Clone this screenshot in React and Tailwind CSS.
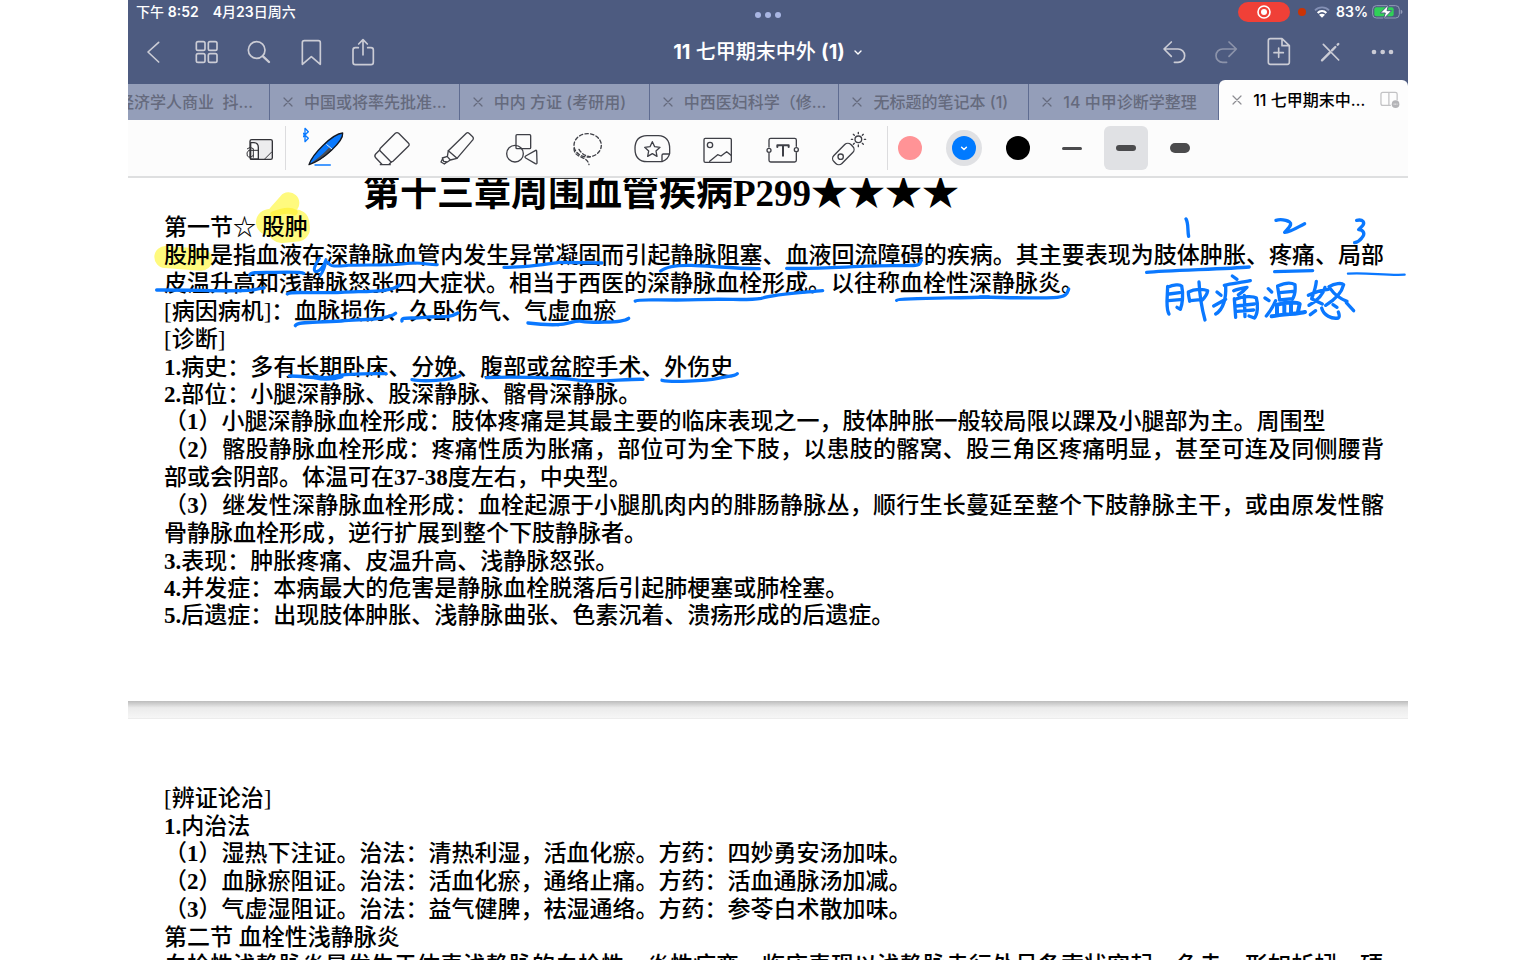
import React, { useState } from "react"

const uiFont = "font-['Inter','Noto_Sans_CJK_SC',sans-serif]"
const docFont = "font-['Liberation_Serif','Noto_Sans_CJK_SC',serif]"

const tabs = [
    '经济学人商业  抖…',
    '中国或将率先批准…',
    '中内 方证 (考研用)',
    '中西医妇科学（修…',
    '无标题的笔记本 (1)',
    '14 中甲诊断学整理',
    '11 七甲期末中…',
]

// "b" marks the latin part that the document sets in bold
const pageOne = [
    { text: '第一节☆ 股肿' },
    { text: '股肿是指血液在深静脉血管内发生异常凝固而引起静脉阻塞、血液回流障碍的疾病。其主要表现为肢体肿胀、疼痛、局部皮温升高和浅静脉怒张四大症状。相当于西医的深静脉血栓形成。以往称血栓性深静脉炎。' },
    { text: '[病因病机]：血脉损伤、久卧伤气、气虚血瘀' },
    { text: '[诊断]' },
    { b: '1.', text: '病史：多有长期卧床、分娩、腹部或盆腔手术、外伤史' },
    { b: '2.', text: '部位：小腿深静脉、股深静脉、髂骨深静脉。' },
    { n: '1', text: '小腿深静脉血栓形成：肢体疼痛是其最主要的临床表现之一，肢体肿胀一般较局限以踝及小腿部为主。周围型' },
    { n: '2', text: '髂股静脉血栓形成：疼痛性质为胀痛，部位可为全下肢，以患肢的髂窝、股三角区疼痛明显，甚至可连及同侧腰背部或会阴部。体温可在', b2: '37-38', rest: '度左右，中央型。' },
    { n: '3', text: '继发性深静脉血栓形成：血栓起源于小腿肌肉内的腓肠静脉丛，顺行生长蔓延至整个下肢静脉主干，或由原发性髂骨静脉血栓形成，逆行扩展到整个下肢静脉者。' },
    { b: '3.', text: '表现：肿胀疼痛、皮温升高、浅静脉怒张。' },
    { b: '4.', text: '并发症：本病最大的危害是静脉血栓脱落后引起肺梗塞或肺栓塞。' },
    { b: '5.', text: '后遗症：出现肢体肿胀、浅静脉曲张、色素沉着、溃疡形成的后遗症。' },
]

const pageTwo = [
    { text: '[辨证论治]' },
    { b: '1.', text: '内治法' },
    { n: '1', text: '湿热下注证。治法：清热利湿，活血化瘀。方药：四妙勇安汤加味。' },
    { n: '2', text: '血脉瘀阻证。治法：活血化瘀，通络止痛。方药：活血通脉汤加减。' },
    { n: '3', text: '气虚湿阻证。治法：益气健脾，祛湿通络。方药：参苓白术散加味。' },
    { text: '第二节 血栓性浅静脉炎' },
    { text: '血栓性浅静脉炎是发生于体表浅静脉的血栓性、炎性病变。临床表现以浅静脉走行处呈条索状突起、色赤、形如蚯蚓、硬' },
]

const NavButton = ({ label, box, dim, children }) => (
    <button aria-label={label} className={`flex w-[52px] shrink-0 justify-center ${dim ? 'opacity-50' : ''}`}>
        <svg viewBox={box} className="size-9" fill="none" stroke="#cbccd5" strokeWidth="5" strokeLinecap="round" strokeLinejoin="round">
            {children}
        </svg>
    </button>
)

const ToolButton = ({ label, box, children }) => (
    <button aria-label={label} className="flex w-[65px] shrink-0 justify-center">
        <svg viewBox={box} className="size-12" fill="none" stroke="#3f4047" strokeWidth="4" strokeLinecap="round" strokeLinejoin="round">
            {children}
        </svg>
    </button>
)

const StatusBar = () => (
    <div className="grid h-6 grid-cols-3 items-center text-sm font-medium text-white">
        <div className="flex gap-3.5 pl-2">
            <span>下午 <b className="font-semibold">8:52</b></span>
            <span><b className="font-semibold">4</b>月<b className="font-semibold">23</b>日周六</span>
        </div>
        <button aria-label="多任务" className="mt-1.5 flex justify-center gap-1">
            <span className="size-1.5 rounded-full bg-[#a9b6e3]" />
            <span className="size-1.5 rounded-full bg-[#a9b6e3]" />
            <span className="size-1.5 rounded-full bg-[#a9b6e3]" />
        </button>
        <div className="flex items-center justify-end pr-1">
            <button aria-label="屏幕录制" className="flex h-5 w-[52px] items-center justify-center rounded-full bg-[#f04037]">
                <svg viewBox="0 0 16 16" className="size-4">
                    <circle cx="8" cy="8" r="6" fill="none" stroke="#fff" strokeWidth="1.6" />
                    <circle cx="8" cy="8" r="3" fill="#fff" />
                </svg>
            </button>
            <span className="ml-2 size-2 rounded-full bg-[#c93305]" />
            <svg viewBox="0 0 48 36" className="ml-2 h-3 w-4" fill="none" strokeLinecap="butt">
                <path d="M3 13 C14 1 34 1 45 13" stroke="#8490b5" strokeWidth="5" />
                <path d="M11 21 C18 13 30 13 37 21" stroke="#fff" strokeWidth="6" />
                <path d="M24 35 L15 26 C20 22 28 22 33 26 Z" fill="#fff" />
            </svg>
            <span className="ml-1.5 font-semibold">83%</span>
            <svg viewBox="0 0 96 48" className="ml-1 h-4 w-8">
                <rect x="2" y="5" width="80" height="37" rx="11" fill="none" stroke="#939cb8" strokeWidth="3" />
                <rect x="7" y="10" width="58" height="27" rx="6" fill="#30d158" />
                <path d="M86 17 C93 19 93 28 86 30 Z" fill="#939cb8" />
                <path d="M50 2 L25 27 H40 L34 46 L59 20 H45 Z" fill="#fff" stroke="#4d5b80" strokeWidth="3" />
            </svg>
        </div>
    </div>
)

const NavBar = () => (
    <div className="flex h-14 items-center">
        <NavButton label="返回" box="24 102 108 108">
            <path d="M92 127 L60 156 L92 186" />
        </NavButton>
        <NavButton label="缩略图" box="180 102 108 108">
            <rect x="205" y="125" width="26" height="26" rx="5" />
            <rect x="241" y="125" width="26" height="26" rx="5" />
            <rect x="205" y="161" width="26" height="26" rx="5" />
            <rect x="241" y="161" width="26" height="26" rx="5" />
        </NavButton>
        <NavButton label="搜索" box="336 102 108 108">
            <circle cx="386" cy="150" r="25" />
            <path d="M405 169 L423 186" strokeWidth="7" />
        </NavButton>
        <NavButton label="书签" box="492 102 108 108">
            <path d="M523 128 Q523 122 529 122 H571 Q577 122 577 128 V193 L550 170 L523 193 Z" />
        </NavButton>
        <NavButton label="分享" box="648 102 108 108">
            <path d="M691 143 H682 Q675 143 675 150 V187 Q675 194 682 194 H729 Q736 194 736 187 V150 Q736 143 729 143 H719" />
            <path d="M705 165 V120 M692 132 L705 119 L718 132" />
        </NavButton>
        <button className="flex flex-1 items-center justify-center gap-2 text-xl font-medium text-white">
            <span><b>11</b> 七甲期末中外 <b>(1)</b></span>
            <svg viewBox="0 0 10 10" className="size-2.5" fill="none" stroke="#fff" strokeWidth="1.4" strokeLinecap="round" strokeLinejoin="round">
                <path d="M2 4 L5 7 L8 4" />
            </svg>
        </button>
        <NavButton label="撤销" box="528 102 108 108">
            <path d="M574 126 L552 147 L574 169 M552 147 H594 A20 20 0 0 1 594 187 H583" />
        </NavButton>
        <NavButton label="重做" box="684 102 108 108" dim>
            <path d="M747 126 L769 147 L747 169 M769 147 H728 A20 20 0 0 0 728 187 H740" />
        </NavButton>
        <NavButton label="添加页面" box="840 102 108 108">
            <path d="M906 116 H871 Q865 116 865 122 V187 Q865 193 871 193 H922 Q928 193 928 187 V137 Z M906 116 V137 H928" />
            <path d="M896 144 V172 M882 158 H910" />
        </NavButton>
        <NavButton label="只读模式" box="996 102 108 108">
            <path d="M1030 133 L1076 180" />
            <path d="M1026 181 L1050 157 M1056 151 L1066 141" strokeWidth="7" />
            <path d="M1073 134 L1075 132" strokeWidth="7" />
        </NavButton>
        <NavButton label="更多" box="1152 102 108 108">
            <g fill="#cbccd5" stroke="none">
                <circle cx="1182" cy="156" r="7" />
                <circle cx="1208" cy="156" r="7" />
                <circle cx="1233" cy="156" r="7" />
            </g>
        </NavButton>
    </div>
)

const CloseIcon = () => (
    <svg viewBox="0 0 10 10" className="size-2.5" fill="none" stroke="currentColor" strokeWidth="1.2" strokeLinecap="round">
        <path d="M1 1 L9 9 M9 1 L1 9" />
    </svg>
)

const TabBar = ({ active, onSelect }) => (
    <div className="flex h-10 items-end text-base font-medium">
        {tabs.map((title, i) => {
            const isActive = i === active
            const first = i === 0
            return (
                <div key={title}
                    className={`flex min-w-0 items-center overflow-hidden ${first ? 'w-[142px] justify-end pr-4' : 'flex-1 gap-2.5 pl-3 pr-2'} ${isActive ? 'h-10 rounded-t-md bg-[#fdfdfd] text-black' : 'h-9 border-r border-[#5f6c91] bg-[#949eb9] text-[#656a7d]'}`}>
                    {!first && (
                        <button aria-label="关闭标签页" className={`flex size-3 shrink-0 items-center justify-center ${isActive ? 'text-[#8d8d92]' : ''}`}>
                            <CloseIcon />
                        </button>
                    )}
                    <button className={`whitespace-pre text-left ${first ? 'shrink-0' : 'flex-1'}`} onClick={() => onSelect(i)}>{title}</button>
                    {isActive && (
                        <button aria-label="分屏" className="shrink-0">
                            <svg viewBox="0 0 63 54" className="h-4.5 w-5" fill="none" stroke="#c2c2c4" strokeWidth="4">
                                <path d="M54 28 V8 Q54 3 48 3 H9 Q3 3 3 9 V38 Q3 44 9 44 H34 M28 3 V44" />
                                <circle cx="49" cy="40" r="12" fill="#b4b4b7" stroke="none" />
                                <path d="M43 40 H55" stroke="#fff" strokeWidth="3" strokeDasharray="3 2" />
                            </svg>
                        </button>
                    )}
                </div>
            )
        })}
    </div>
)

const strokeSizes = [
    { label: '细', bar: 'h-[3px]' },
    { label: '中', bar: 'h-1.5' },
    { label: '粗', bar: 'h-2.5' },
]

const Toolbar = () => {
    const [size, setSize] = useState(1)

    return (
        <div className="flex h-[58px] items-center border-b-2 border-[#dedfe0] bg-[#fcfcfc] pl-[107px]">
            <button aria-label="缩放窗口" className="shrink-0">
                <svg viewBox="321 372 144 144" className="size-12" fill="none" stroke="#333338" strokeWidth="4" strokeLinecap="round" strokeLinejoin="round">
                    <rect x="366" y="419" width="67" height="59" rx="5" fill="#ececee" />
                    <path d="M368 428 H378 Q391 429 391 442 V477 H368 Z" fill="#fcfcfc" />
                    <path d="M358 446 Q366 438 376 446 V472 M390 451 H362 Q354 458 358 468 Q366 476 376 466" strokeWidth="3" />
                    <path d="M411 476 L431 456" strokeWidth="3" />
                </svg>
            </button>
            <div className="ml-0.5 h-11 w-px bg-[#dcdcde]" />
            <div className="ml-2 flex">
                <ToolButton label="钢笔" box="524 372 144 144">
                    <path d="M542 494 C552 462 612 402 643 399 C646 424 584 480 542 494 Z" fill="#0a7aff" stroke="none" />
                    <path d="M542 494 C572 472 588 458 602 443 L611 450 C590 472 566 486 542 494 Z" fill="#4a4e57" stroke="none" />
                    <path d="M542 494 C552 462 612 402 643 399 C646 424 584 480 542 494 Z" stroke="#15181f" />
                    <path d="M595 434 L610 446" stroke="#dfe8f5" strokeWidth="3" />
                    <path d="M560 495 H606" stroke="#0a7aff" />
                    <path d="M520 396 L540 415 L530 425 V385 L540 395 L520 414" stroke="#0a7aff" strokeWidth="4" />
                </ToolButton>
                <ToolButton label="橡皮擦" box="719 372 144 144">
                    <path d="M801 400 Q806 396 811 400 L840 429 Q845 434 840 439 L794 484 Q790 487 786 484 L755 452 Q753 448 756 445 Z" />
                    <path d="M754 450 L742 462 Q737 468 742 473 L762 494 H781 L789 486 M756 494 H786" />
                </ToolButton>
                <ToolButton label="荧光笔" box="914 372 144 144">
                    <path d="M1014 400 Q1018 396 1022 400 L1033 410 Q1037 414 1034 419 L986 475 L960 452 Z" />
                    <path d="M960 452 L957 470 L966 480 L986 475 M955 470 L942 474 L946 484 L957 486 L966 480 M942 478 L938 486 L948 492 L956 486" />
                </ToolButton>
                <ToolButton label="形状" box="1109 372 144 144">
                    <rect x="1163" y="404" width="44" height="42" rx="3" />
                    <circle cx="1160" cy="461" r="25" />
                    <path d="M1222 451 Q1225 450 1225 454 L1226 488 Q1226 493 1221 491 L1192 474 Q1188 471 1192 468 Z" />
                </ToolButton>
                <ToolButton label="套索" box="14 372 144 144">
                    <ellipse cx="88" cy="436" rx="41" ry="35" strokeDasharray="10 7" />
                    <path d="M47 446 C48 476 86 466 92 494 M62 448 C70 462 82 468 94 470" strokeDasharray="10 7" />
                </ToolButton>
                <ToolButton label="贴纸" box="209 372 144 144">
                    <path d="M311 485 H266 Q230 484 230 446 Q230 408 266 407 H300 Q334 409 334 446 V460 Q330 478 311 485 Z" />
                    <path d="M311 484 V466 Q311 462 315 462 H333" />
                    <path d="M282 425 L289 440 L305 442 L293 453 L296 469 L282 461 L268 469 L271 453 L259 442 L275 440 Z" />
                </ToolButton>
                <ToolButton label="图片" box="404 372 144 144">
                    <rect x="437" y="415" width="82" height="72" rx="4" />
                    <circle cx="455" cy="435" r="8" />
                    <path d="M454 484 L478 464 L488 468 L505 455 L518 466" />
                </ToolButton>
                <ToolButton label="文本" box="599 372 144 144">
                    <path d="M632 441 V420 Q632 415 637 415 H709 Q714 415 714 420 V439 M632 460 V481 Q632 486 637 486 H709 Q714 486 714 481 V458" />
                    <circle cx="632" cy="451" r="6" />
                    <circle cx="714" cy="449" r="6" />
                    <path d="M657 441 V436 H691 V441 M674 436 V467" strokeWidth="6" />
                </ToolButton>
                <ToolButton label="激光笔" box="794 372 144 144">
                    <rect x="838" y="426" width="34" height="72" rx="13" transform="rotate(45 855 462)" />
                    <circle cx="847" cy="470" r="8" />
                    <circle cx="900" cy="418" r="10" />
                    <path d="M900 397 V401 M900 435 V440 M879 418 H883 M918 418 H922 M885 403 L888 406 M912 430 L915 433 M915 403 L912 406 M885 433 L888 430" />
                </ToolButton>
            </div>
            <div className="ml-2 h-11 w-px bg-[#dcdcde]" />
            <div className="ml-1 flex items-center gap-[18px]">
                <button aria-label="粉色" className="flex size-9 items-center justify-center">
                    <span className="size-6 rounded-full bg-[#ff9396]" />
                </button>
                <button aria-label="蓝色" className="flex size-9 items-center justify-center rounded-full bg-[#e0e1e4]">
                    <span className="flex size-6 items-center justify-center rounded-full bg-[#007aff]">
                        <svg viewBox="0 0 10 10" className="size-2" fill="none" stroke="#fff" strokeWidth="1.8" strokeLinecap="round" strokeLinejoin="round">
                            <path d="M2 4 L5 7 L8 4" />
                        </svg>
                    </span>
                </button>
                <button aria-label="黑色" className="flex size-9 items-center justify-center">
                    <span className="size-6 rounded-full bg-black" />
                </button>
            </div>
            <div className="ml-3.5 flex gap-2.5">
                {strokeSizes.map((s, i) => (
                    <button key={s.label} aria-label={s.label} onClick={() => setSize(i)}
                        className={`flex size-11 items-center justify-center rounded-md ${i === size ? 'bg-[#e0e1e4]' : ''}`}>
                        <span className={`w-5 rounded-full bg-[#4b4b4d] ${s.bar}`} />
                    </button>
                ))}
            </div>
        </div>
    )
}

const Line = ({ b, n, text, b2, rest }) => (
    <p className={`text-justify ${b ? 'leading-[27px]' : 'leading-7'}`}>
        {b && <b>{b}</b>}
        {n && <>（<b>{n}</b>）</>}
        {text}
        {b2 && <b>{b2}</b>}
        {rest}
    </p>
)

// marker strokes lie under the text
const Highlights = () => (
    <svg viewBox="0 0 1280 782" className="absolute left-0 top-0 h-[782px] w-[1280px]" fill="none" stroke="#fffa7e" strokeLinecap="round" strokeLinejoin="round">
        <g transform="translate(0 -3) scale(0.3333)">
            <path d="M482 84 L452 118" strokeWidth="64" />
            <path d="M424 142 C450 138 480 136 504 144 L506 160 L460 164" strokeWidth="80" />
            <path d="M112 246 L220 254" strokeWidth="66" />
            <path d="M436 118 Q480 100 500 112" stroke="#fff44a" strokeWidth="18" />
        </g>
    </svg>
)

const Ink = () => (
    <svg viewBox="0 0 1280 782" className="pointer-events-none absolute left-0 top-0 h-[782px] w-[1280px]" fill="none" stroke="#0a78ff" strokeWidth="10" strokeLinecap="round" strokeLinejoin="round">
        <g transform="translate(0 -3) scale(0.3333)">
            <path d="M365 300 C368 290 400 293 440 292 S520 290 527 295" />
            <path d="M574 250 C560 270 554 288 564 290 C576 290 588 272 594 254 M594 254 C592 272 586 290 576 302 M600 262 C606 276 625 274 660 271 S780 272 830 266 S900 270 928 269" strokeWidth="9" />
            <path d="M1128 277 C1180 278 1240 270 1290 263" />
            <path d="M86 345 C200 344 340 352 380 344 S405 340 408 338" />
            <path d="M478 357 C484 348 560 356 640 352 S790 352 815 330" />
            <path d="M502 452 C510 438 560 444 640 438 S780 434 803 415" />
            <path d="M822 438 C818 424 850 432 890 427 S960 432 990 414" />
            <path d="M1200 444 C1230 448 1270 450 1292 449" />
            <path d="M484 603 C540 604 580 614 620 604 S740 596 774 596" />
            <path d="M560 606 Q600 616 640 604" strokeWidth="14" />
            <path d="M852 614 C880 620 970 618 996 602" />
            <path d="M1075 608 C1150 604 1220 608 1292 609" />
        </g>
        <g transform="translate(430 -3) scale(0.3333)">
            <path d="M0 262 L132 264" />
            <path d="M0 449 C30 448 50 436 70 439 S190 446 212 430" />
            <path d="M0 609 C40 610 50 618 100 618 S220 612 255 613" />
            <path d="M308 288 C320 278 350 270 400 271 S540 282 604 281" />
            <path d="M686 280 C780 284 900 272 1000 272 S1080 272 1090 256" />
            <path d="M232 378 C240 370 320 378 420 374 S560 378 610 370 C650 358 720 354 794 347" />
            <path d="M1016 376 C1020 370 1140 370 1292 366" />
            <path d="M312 616 C340 622 440 618 480 610 S530 604 538 596" />
        </g>
        <g transform="translate(852 -3) scale(0.3333)">
            <path d="M0 366 C80 368 180 370 220 368 S262 355 266 342" />
            <path d="M618 132 C626 145 622 165 626 184" />
            <path d="M888 136 C905 130 935 138 932 148 C930 158 918 166 914 172 C935 170 955 155 974 146" />
            <path d="M1130 136 C1150 132 1155 142 1148 152 L1136 164 C1152 164 1156 178 1146 188 C1140 196 1130 202 1124 203" />
            <path d="M500 292 C560 286 740 282 808 276" />
            <path d="M884 290 L998 287" />
            <path d="M1104 296 C1160 292 1220 302 1274 299" strokeWidth="7" />
        </g>
        <g transform="translate(1027 90) scale(0.3333)">
            <path d="M38 55 L36 100 C36 120 40 135 42 138 M38 58 C55 50 75 48 80 54 C86 80 82 110 76 124 L66 118 M42 78 L74 74 M40 98 L76 95" />
            <path d="M100 72 C100 85 104 95 104 100 M100 72 C120 62 145 62 158 68 C156 82 146 92 140 98 M106 98 L144 94 M132 42 C134 80 140 120 150 156" />
            <path d="M232 24 L246 34 M208 52 C230 46 260 44 286 38 M212 54 C214 90 205 125 182 138 M186 72 L198 82 M176 114 L212 94" />
            <path d="M236 68 C250 62 265 60 276 58 C268 68 258 76 250 80 M238 92 L242 148 M240 94 C265 84 295 84 304 90 C310 110 308 140 298 150 L282 144 M244 114 L298 108 M246 130 L296 126 M268 82 L270 146" />
            <path d="M340 62 L350 72 M330 90 L342 98 M334 144 C344 132 356 112 362 98 M368 56 L374 96 M368 54 C390 44 410 44 420 50 C422 70 418 85 412 94 M374 74 L414 70 M374 96 L412 92" />
            <path d="M366 110 L366 138 M368 110 C395 102 425 102 434 108 L428 136 M388 108 V138 M408 106 V138 M350 145 C390 138 430 138 450 132" strokeWidth="12" />
            <path d="M484 40 C482 62 474 80 470 92 L502 108 M510 58 C502 88 480 102 462 112 M460 82 C480 72 500 66 520 64 M522 56 C540 46 560 44 566 50 C560 75 545 92 512 112 M526 62 C542 85 560 94 576 100" />
            <path d="M466 140 L482 128 M500 120 C506 142 530 154 550 150 C556 145 552 138 550 132 M534 110 L546 118 M574 104 L596 128" />
        </g>
    </svg>
)

const Document = () => (
    <div className={`relative min-h-0 flex-1 overflow-hidden text-[23px] font-medium text-black ${docFont}`}>
        <Highlights />
        <section className="relative pb-[72px] pl-9 pr-6">
            <h1 className="-mt-1 pl-[199px] text-[37px] font-bold leading-10">第十三章周围血管疾病P299★★★★</h1>
            {pageOne.map(line => <Line key={line.text} {...line} />)}
        </section>
        <div className="relative h-[18px] border-b border-[#ececec] bg-linear-to-b from-[#bcbcbc] via-[#ebebeb] via-40% to-[#f6f6f6]" />
        <section className="relative pl-9 pr-6 pt-[66px]">
            {pageTwo.map(line => <Line key={line.text} {...line} />)}
        </section>
        <Ink />
    </div>
)

const App = () => {
    const [active, setActive] = useState(tabs.length - 1)

    return (
        <div className="h-screen bg-white">
            <div className={`mx-auto flex h-full max-w-7xl flex-col bg-white ${uiFont}`}>
                <header className="shrink-0 bg-[#4d5b80]">
                    <StatusBar />
                    <NavBar />
                    <TabBar active={active} onSelect={setActive} />
                    <Toolbar />
                </header>
                <Document />
            </div>
        </div>
    )
}

export default App
